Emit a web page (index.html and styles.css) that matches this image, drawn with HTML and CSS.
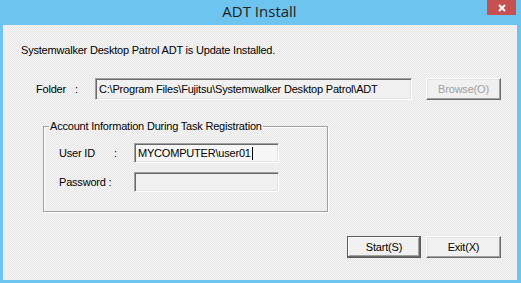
FILE: index.html
```html
<!DOCTYPE html>
<html>
<head>
<meta charset="utf-8">
<link rel="stylesheet" href="styles.css">
</head>
<body>
<div class="window">
  <div class="titlebar">
    <span class="title">ADT Install</span>
    <div class="close">
      <svg width="8" height="8" viewBox="0 0 8 8"><path d="M1 1L7 7M7 1L1 7" stroke="#fff" stroke-width="2" fill="none"/></svg>
    </div>
  </div>
  <div class="client">
    <p class="msg">Systemwalker Desktop Patrol ADT is Update Installed.</p>
    <div class="folder-row">
      <span class="folder-label">Folder</span><span class="folder-colon">:</span>
      <div class="textbox folder-box">C:\Program Files\Fujitsu\Systemwalker Desktop Patrol\ADT</div>
      <div class="btn disabled browse">Browse(O)</div>
    </div>
    <fieldset class="group">
      <legend>Account Information During Task Registration</legend>
      <div class="field-row">
        <span class="flabel">User ID</span><span class="fcolon">:</span>
        <div class="textbox input user">MYCOMPUTER\user01<span class="caret"></span></div>
      </div>
      <div class="field-row">
        <span class="flabel wide">Password :</span>
        <div class="textbox input"></div>
      </div>
    </fieldset>
    <div class="buttons">
      <div class="btn default">Start(S)</div>
      <div class="btn">Exit(X)</div>
    </div>
  </div>
</div>
</body>
</html>
```

FILE: styles.css
```css
html, body {
  margin: 0;
  padding: 0;
}
body {
  width: 521px;
  height: 283px;
  overflow: hidden;
  font-family: "Liberation Sans", Arial, sans-serif;
  font-size: 11px;
  letter-spacing: -0.2px;
  color: #000;
}
.window {
  width: 521px;
  height: 283px;
  background: #6cc4ef;
  display: flex;
  flex-direction: column;
}
.titlebar {
  height: 25px;
  flex: none;
  display: grid;
  grid-template-columns: 1fr auto 1fr;
}
.title {
  grid-column: 2;
  font-family: "Open Sans", "Noto Sans", sans-serif;
  font-size: 15px;
  letter-spacing: 0;
  line-height: 23px;
  color: #222;
  margin-right: 2px;
}
.close {
  grid-column: 3;
  justify-self: end;
  align-self: start;
  width: 29px;
  height: 15px;
  margin-right: 5px;
  background: #c75050;
  display: flex;
  align-items: center;
  justify-content: center;
}
.close svg { display: block; }
.client {
  flex: 1;
  margin: 0 4px 3px 3px;
  background-color: #efefef;
  background-image: repeating-conic-gradient(#f3f3f3 0 25%, #e9e9e9 0 50%);
  background-size: 2px 2px;
  display: flex;
  flex-direction: column;
}
.msg {
  margin: 18px 0 0 18px;
  line-height: 14px;
  height: 14px;
}
.folder-row {
  display: flex;
  align-items: center;
  margin-top: 21px;
  height: 22px;
}
.folder-label {
  margin-left: 33px;
  width: 39px;
}
.folder-colon {
  width: 20px;
}
.textbox {
  box-sizing: border-box;
  border-top: 1px solid #a0a0a0;
  border-left: 1px solid #a0a0a0;
  border-bottom: 1px solid #fff;
  border-right: 1px solid #fff;
  box-shadow: inset 1px 1px 0 #696969, inset -1px -1px 0 #e3e3e3;
  background: #f0f0f0;
  display: flex;
  align-items: center;
  padding-left: 3px;
  white-space: nowrap;
}
.folder-box {
  width: 317px;
  height: 22px;
}
.btn {
  box-sizing: border-box;
  height: 22px;
  background: #f0f0f0;
  border-top: 1px solid #fff;
  border-left: 1px solid #fff;
  border-right: 1px solid #696969;
  border-bottom: 1px solid #696969;
  box-shadow: inset -1px -1px 0 #a0a0a0, inset 1px 1px 0 #e3e3e3;
  display: flex;
  align-items: center;
  justify-content: center;
}
.browse {
  width: 75px;
  margin-left: 14px;
}
.disabled {
  color: #a0a0a0;
}
.group {
  margin: 19px 0 0 40px;
  width: 285px;
  box-sizing: border-box;
  border: 1px solid #a0a0a0;
  box-shadow: 1px 1px 0 #fff, inset 1px 1px 0 #fff;
  padding: 10px 0 19px 15px;
}
.group legend {
  padding: 0 1px;
  margin-left: -10px;
  line-height: 14px;
}
.field-row {
  display: flex;
  align-items: center;
  height: 20px;
}
.field-row + .field-row {
  margin-top: 9px;
}
.flabel {
  width: 55px;
}
.flabel.wide {
  width: 75px;
}
.fcolon {
  width: 20px;
}
.input {
  width: 145px;
  height: 20px;
}
.user {
  background: #f6f6f6;
}
.caret {
  display: inline-block;
  width: 1px;
  height: 13px;
  background: #000;
  margin-left: 1px;
}
.buttons {
  display: flex;
  justify-content: flex-end;
  gap: 5px;
  margin: 24px 16px 0 0;
}
.buttons .btn {
  width: 75px;
}
.buttons .default {
  width: 74px;
  border: 1px solid #5a5a5a;
  box-shadow: inset -1px -1px 0 #696969, inset 1px 1px 0 #fff, inset -2px -2px 0 #a0a0a0;
}
```
